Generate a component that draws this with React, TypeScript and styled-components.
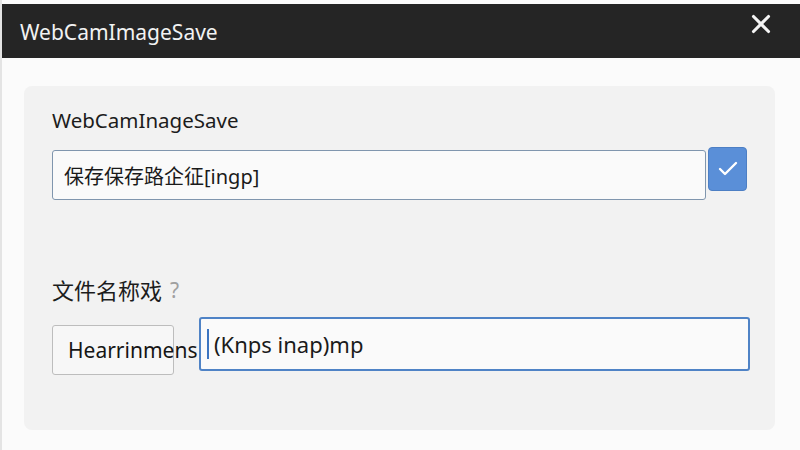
import { X, Check } from "lucide-react";
import styled, { createGlobalStyle } from "styled-components";

const Global = createGlobalStyle`
  html, body {
    margin: 0;
    padding: 0;
    background: #fbfbfb;
    font-family: "Noto Sans", "Noto Sans CJK SC", sans-serif;
  }
`;

const Window = styled.div`
  width: 800px;
  height: 450px;
  display: flex;
  flex-direction: column;
  padding-top: 4px;
  box-sizing: border-box;
  background: #fbfbfb;
  border-left: 2px solid #e4e4e4;
`;

const TitleBar = styled.div`
  height: 54px;
  flex-shrink: 0;
  background: #252525;
  display: flex;
  align-items: center;
  justify-content: space-between;
  padding: 0 24px 0 18px;
`;

const Title = styled.div`
  color: #f2f2f2;
  font-size: 21px;
  margin-top: 2px;
`;

const CloseButton = styled.button`
  background: none;
  border: none;
  padding: 0;
  color: #f4f4f4;
  display: flex;
  align-self: flex-start;
  margin-top: 5px;
`;

const Body = styled.div`
  flex: 1;
  padding: 28px 25px 20px 22px;
  display: flex;
`;

const Panel = styled.div`
  flex: 1;
  background: #f2f2f2;
  border-radius: 8px;
  padding: 20px 25px 0 28px;
  display: flex;
  flex-direction: column;
`;

const Label = styled.div<{ $cjk?: boolean }>`
  color: #1c1c1c;
  font-size: ${(p) => (p.$cjk ? "22px" : "20.5px")};
  line-height: 28px;
  display: flex;
  align-items: center;
  gap: 8px;
`;

const Hint = styled.span`
  color: #a0a0a0;
  font-size: 21px;
`;

const Row = styled.div<{ $gap: number }>`
  display: flex;
  align-items: flex-start;
  gap: ${(p) => p.$gap}px;
`;

const Field = styled.div<{ $active?: boolean; $h: number }>`
  flex: 1;
  height: ${(p) => p.$h}px;
  box-sizing: border-box;
  background: #fafafa;
  border: ${(p) => (p.$active ? "2px solid #4f83c6" : "1.5px solid #8096ae")};
  border-radius: 3px;
  display: flex;
  align-items: center;
  padding-left: ${(p) => (p.$active ? 6 : 11)}px;
  font-size: ${(p) => (p.$active ? "22px" : "20px")};
  color: #1a1a1a;
  white-space: nowrap;
`;

const Caret = styled.span`
  width: 2px;
  height: 30px;
  background: #3c74c0;
  margin-right: 5px;
`;

const ConfirmButton = styled.button`
  width: 39px;
  height: 44px;
  margin-top: -3px;
  margin-right: 3px;
  background: #5a8fd8;
  border: 1px solid #4d7fc4;
  border-radius: 4px;
  color: #fff;
  display: flex;
  align-items: center;
  justify-content: center;
  padding: 0;
`;

const NameButton = styled.button`
  width: 122px;
  height: 50px;
  margin-top: 8px;
  box-sizing: border-box;
  background: #f7f7f7;
  border: 1.5px solid #bdbdbd;
  border-radius: 3px;
  font-family: inherit;
  font-size: 21px;
  color: #151515;
  text-align: left;
  padding: 0 0 0 15px;
  white-space: nowrap;
  overflow: visible;
`;

export default function App() {
  return (
    <>
      <Global />
      <Window>
        <TitleBar>
          <Title>WebCamImageSave</Title>
          <CloseButton>
            <X size={30} strokeWidth={2.5} />
          </CloseButton>
        </TitleBar>
        <Body>
          <Panel>
            <Label>WebCamInageSave</Label>
            <Row $gap={2} style={{ marginTop: 16 }}>
              <Field $h={50}>保存保存路企征[ingp]</Field>
              <ConfirmButton>
                <Check size={24} strokeWidth={2.4} />
              </ConfirmButton>
            </Row>
            <Label $cjk style={{ marginTop: 76 }}>
              文件名称戏 <Hint>?</Hint>
            </Label>
            <Row $gap={25} style={{ marginTop: 13 }}>
              <NameButton>Hearrinmens</NameButton>
              <Field $active $h={54}>
                <Caret />
                (Knps inap)mp
              </Field>
            </Row>
          </Panel>
        </Body>
      </Window>
    </>
  );
}
